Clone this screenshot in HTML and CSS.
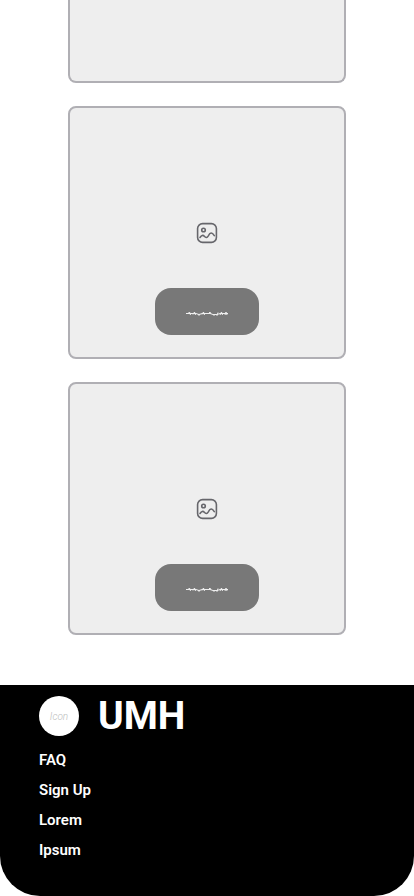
FILE: index.html
```html
<!DOCTYPE html>
<html lang="en">
<head>
<meta charset="utf-8">
<meta name="viewport" content="width=device-width, initial-scale=1">
<title>UMH</title>
<link rel="stylesheet" href="styles.css">
</head>
<body>
<svg class="symbols" aria-hidden="true">
  <symbol id="picture" viewBox="0 0 24 24">
    <g fill="none" stroke="currentColor" stroke-width="1.6" stroke-linecap="round" stroke-linejoin="round">
      <rect x="2.6" y="2.6" width="18.8" height="18.8" rx="5"/>
      <circle cx="8.5" cy="9" r="1.8"/>
      <path d="M5 16.5C6.6 14.2 8 13.8 9.3 15.3C10.8 17 12 17 13.3 14.8C15.3 11.2 17 11.2 19.3 14.6"/>
    </g>
  </symbol>
  <symbol id="scribble" viewBox="0 0 42 8">
    <g fill="none" stroke="currentColor" stroke-linejoin="round">
      <path stroke-width="1" d="M0 3.5H10L13 4.5L16 3.5H24L27 4.5H31L34 3.5H42"/>
      <path stroke-width="1" d="M2 3.5L3.5 2L4.5 5M7 4.5L8.5 2L9.5 5M12 4L13 5.5L14 4M16 4.5L17.5 2L18.5 5M22 4L24 2L25 4M27 4L28 5.5L29.5 4L31 5.5L32 2.5M34 5L35.5 2L36.5 5M39 5L40 2L41 5"/>
    </g>
  </symbol>
</svg>
<main class="cards">
  <article class="card card-tail"></article>
  <article class="card">
    <svg class="picture" aria-hidden="true"><use href="#picture"/></svg>
    <button class="action" type="button" aria-label="Open"><svg class="scribble" aria-hidden="true"><use href="#scribble"/></svg></button>
  </article>
  <article class="card">
    <svg class="picture" aria-hidden="true"><use href="#picture"/></svg>
    <button class="action" type="button" aria-label="Open"><svg class="scribble" aria-hidden="true"><use href="#scribble"/></svg></button>
  </article>
</main>
<footer class="footer">
  <div class="brand">
    <span class="logo">Icon</span>
    <span class="name">UMH</span>
  </div>
  <nav class="links">
    <a href="#faq">FAQ</a>
    <a href="#signup">Sign Up</a>
    <a href="#lorem">Lorem</a>
    <a href="#ipsum">Ipsum</a>
  </nav>
</footer>
</body>
</html>
```
FILE: styles.css
```css
* {
  box-sizing: border-box;
}

body {
  margin: 0;
  min-height: 100vh;
  display: flex;
  flex-direction: column;
  background: #fff;
  font-family: Roboto, "Liberation Sans", sans-serif;
}

.symbols {
  display: none;
}

.cards {
  display: flex;
  flex-direction: column;
  gap: 23px;
  padding: 0 68px 50px;
}

.card {
  display: flex;
  flex-direction: column;
  align-items: center;
  justify-content: flex-end;
  gap: 43px;
  min-height: 253px;
  padding-bottom: 22px;
  border: 2px solid #b0afb4;
  border-radius: 8px;
  background: #eee;
}

.card-tail {
  min-height: 83px;
  border-top: 0;
  border-radius: 0 0 8px 8px;
}

.picture {
  width: 24px;
  height: 24px;
  color: #66666b;
}

.action {
  display: flex;
  align-items: center;
  justify-content: center;
  width: 104px;
  height: 47px;
  padding: 4px 0 0;
  border: 0;
  border-radius: 16px;
  background: #787878;
  color: #eee;
}

.scribble {
  width: 42px;
  height: 8px;
}

.footer {
  flex: 1;
  padding: 8px 39px 31px;
  border-radius: 0 0 40px 40px;
  background: #000;
  color: #fff;
}

.brand {
  display: flex;
  align-items: center;
  gap: 19px;
}

.logo {
  display: flex;
  align-items: center;
  justify-content: center;
  width: 40px;
  height: 40px;
  border-radius: 50%;
  background: #fff;
  color: #bbb;
  font-size: 10px;
  font-style: italic;
  font-weight: 300;
}

.name {
  font-size: 39px;
  line-height: 46px;
  font-weight: 700;
}

.links {
  display: flex;
  flex-direction: column;
  align-items: flex-start;
  margin-top: 6px;
}

.links a {
  color: inherit;
  font-size: 15px;
  line-height: 30px;
  font-weight: 600;
  text-decoration: none;
}
```
